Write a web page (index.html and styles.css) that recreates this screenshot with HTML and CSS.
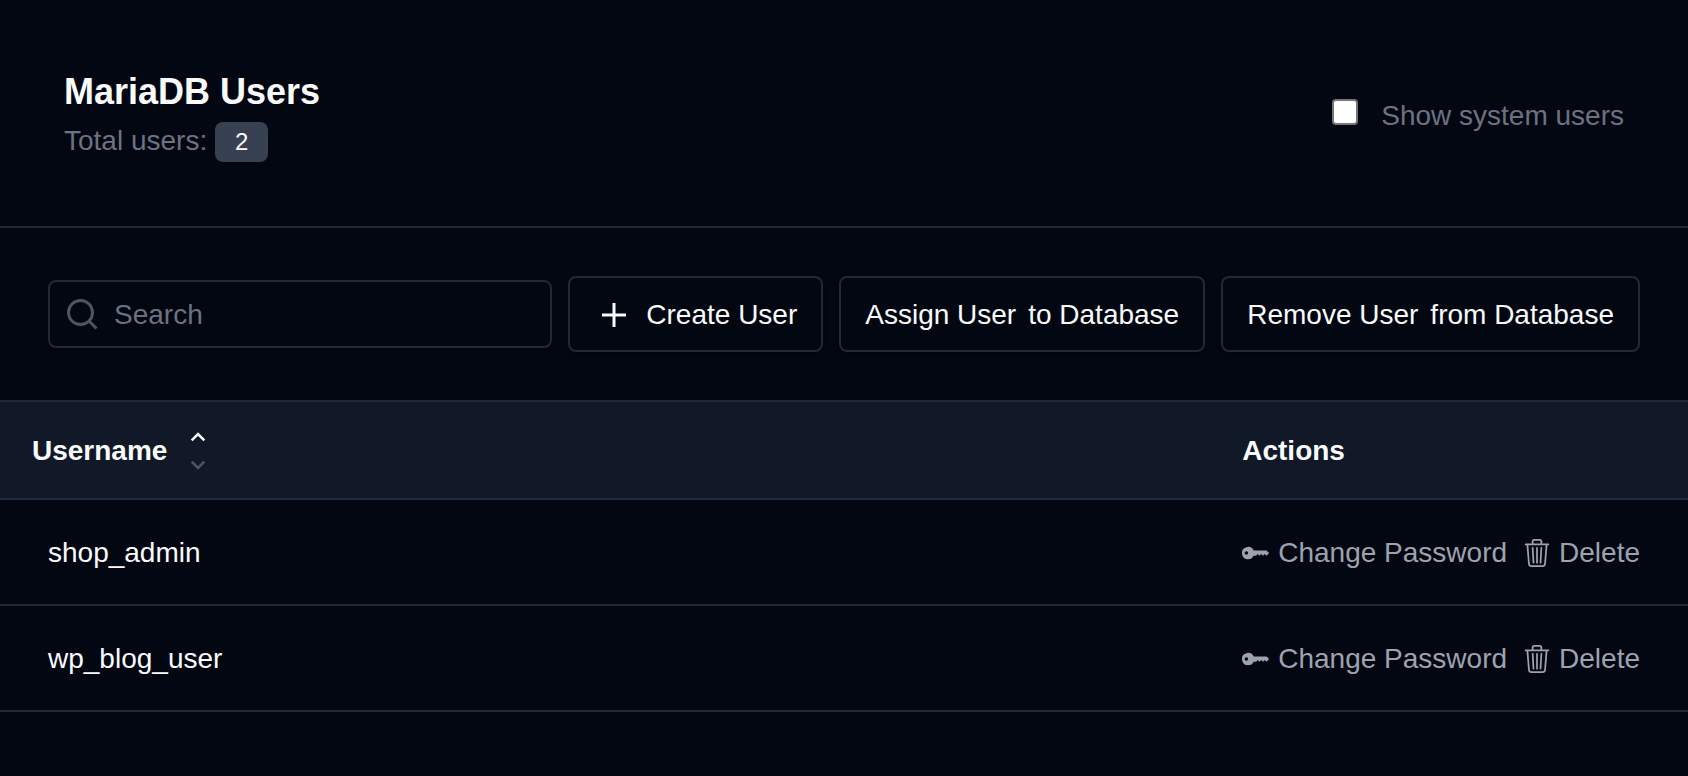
FILE: index.html
```html
<!DOCTYPE html>
<html lang="en">
<head>
    <meta charset="utf-8">
    <title>MariaDB Users</title>
    <link rel="stylesheet" href="styles.css">
</head>
<body>
    <svg class="sprite" aria-hidden="true">
        <symbol id="icon-key" viewBox="0 0 16 16">
            <path d="M3.5 11.5a3.5 3.5 0 1 1 3.163-5H14L15.5 8 14 9.5l-1-1-1 1-1-1-1 1-1-1-1 1H6.663a3.5 3.5 0 0 1-3.163 2zM2.5 9a1 1 0 1 0 0-2 1 1 0 0 0 0 2z"/>
        </symbol>
        <symbol id="icon-trash" viewBox="0 0 16 16">
            <path d="M6.5 1h3a.5.5 0 0 1 .5.5v1H6v-1a.5.5 0 0 1 .5-.5ZM11 2.5v-1A1.5 1.5 0 0 0 9.5 0h-3A1.5 1.5 0 0 0 5 1.5v1H1.5a.5.5 0 0 0 0 1h.538l.853 10.66A2 2 0 0 0 4.885 16h6.23a2 2 0 0 0 1.994-1.84l.853-10.66h.538a.5.5 0 0 0 0-1H11Zm1.958 1-.846 10.58a1 1 0 0 1-.997.92h-6.23a1 1 0 0 1-.997-.92L3.042 3.5h9.916Zm-7.487 1a.5.5 0 0 1 .528.47l.5 8.5a.5.5 0 0 1-.998.06L5 5.03a.5.5 0 0 1 .47-.53Zm5.058 0a.5.5 0 0 1 .47.53l-.5 8.5a.5.5 0 1 1-.998-.06l.5-8.5a.5.5 0 0 1 .528-.47ZM8 4.5a.5.5 0 0 1 .5.5v8.5a.5.5 0 0 1-1 0V5a.5.5 0 0 1 .5-.5Z"/>
        </symbol>
    </svg>

    <header class="page-header">
        <div>
            <h1 class="page-title">MariaDB Users</h1>
            <p class="total">Total users: <span class="badge">2</span></p>
        </div>
        <div class="system-toggle">
            <input type="checkbox" id="show-system">
            <label for="show-system">Show system users</label>
        </div>
    </header>

    <div class="toolbar">
        <div class="search">
            <svg class="search-icon" viewBox="0 0 32 32" aria-hidden="true">
                <circle cx="14.5" cy="14.5" r="12"/>
                <path d="M23 23l7.500 7.500"/>
            </svg>
            <input type="search" class="search-box" placeholder="Search" aria-label="Search">
        </div>
        <button type="button" class="btn">
            <svg class="plus-icon" viewBox="0 0 40 40" aria-hidden="true"><path d="M20 8v24M8 20h24"/></svg>
            Create User
        </button>
        <button type="button" class="btn"><span>Assign User</span><span>to Database</span></button>
        <button type="button" class="btn"><span>Remove User</span><span>from Database</span></button>
    </div>

    <table class="users">
        <thead>
            <tr>
                <th scope="col">
                    <button type="button" class="sort">
                        Username
                        <svg class="sort-icon" viewBox="0 0 18 40" aria-hidden="true">
                            <path d="M2.700 9.300l6.300-6.300 6.300 6.300"/>
                            <path class="sort-off" d="M2.700 30.700l6.300 6.300 6.300-6.300"/>
                        </svg>
                    </button>
                </th>
                <th scope="col" class="actions-col">Actions</th>
            </tr>
        </thead>
        <tbody>
            <tr>
                <td>shop_admin</td>
                <td class="actions-col">
                    <div class="actions">
                        <a href="#" class="action"><svg class="icon"><use href="#icon-key"/></svg>Change Password</a>
                        <a href="#" class="action"><svg class="icon"><use href="#icon-trash"/></svg>Delete</a>
                    </div>
                </td>
            </tr>
            <tr>
                <td>wp_blog_user</td>
                <td class="actions-col">
                    <div class="actions">
                        <a href="#" class="action"><svg class="icon"><use href="#icon-key"/></svg>Change Password</a>
                        <a href="#" class="action"><svg class="icon"><use href="#icon-trash"/></svg>Delete</a>
                    </div>
                </td>
            </tr>
        </tbody>
    </table>
</body>
</html>
```
FILE: styles.css
```css
* {
    box-sizing: border-box;
}
body {
    margin: 0;
    font-family: "Liberation Sans", Arial, sans-serif;
    font-size: 28px;
    line-height: 41px;
    background: #030712;
    color: #f9fafb;
}
button,
input {
    font: inherit;
    color: inherit;
}
.sprite {
    display: none;
}
.page-header {
    display: flex;
    align-items: center;
    justify-content: space-between;
    padding: 64px;
    border-bottom: 2px solid #1f2937;
}
.page-title {
    margin: 0;
    font-size: 36px;
    line-height: 56px;
}
.total {
    margin: 0;
    line-height: 42px;
    color: #6b7280;
}
.badge {
    display: inline-block;
    padding: 0 20px;
    border-radius: 8px;
    background: #374151;
    color: #f9fafb;
    font-size: 24px;
    line-height: 40px;
}
.system-toggle {
    display: flex;
    align-items: baseline;
    gap: 23px;
    padding-top: 4px;
    color: #6b7280;
}
.system-toggle input {
    width: 26px;
    height: 26px;
    margin: 0;
    border: 2px solid #767676;
    border-radius: 4px;
    background: #fff;
    appearance: none;
}
.system-toggle input:checked {
    background: #3b82f6;
}
.toolbar {
    display: flex;
    align-items: center;
    gap: 16px;
    padding: 48px;
}
.search {
    position: relative;
    flex: 1;
}
.search-icon {
    position: absolute;
    top: 18px;
    left: 18px;
    width: 32px;
    height: 32px;
    fill: none;
    stroke: #4b5563;
    stroke-width: 3;
}
.search-box {
    display: block;
    width: 100%;
    height: 68px;
    padding: 1px 16px 0 64px;
    border: 2px solid #1f2937;
    border-radius: 8px;
    background: transparent;
    box-shadow: 0 2px 4px rgba(0, 0, 0, 0.3);
    appearance: none;
}
.search-box::placeholder {
    color: #6b7280;
}
.btn {
    display: flex;
    align-items: center;
    gap: 12px;
    padding: 16px 24px 15px;
    border: 2px solid #1f2937;
    border-radius: 8px;
    background: transparent;
    box-shadow: 0 2px 4px rgba(0, 0, 0, 0.3);
    white-space: nowrap;
    cursor: pointer;
}
.btn:hover {
    background: #111827;
}
.plus-icon {
    width: 40px;
    height: 40px;
    fill: none;
    stroke: currentColor;
    stroke-width: 3;
}
.users {
    width: 100%;
    border-collapse: separate;
    border-spacing: 0;
}
.users th {
    padding: 28px 32px 27px;
    border-top: 2px solid #1f2937;
    border-bottom: 2px solid #1f2937;
    background: #111827;
    text-align: left;
}
.users td {
    padding: 32px 48px 31px;
    border-bottom: 2px solid #1f2937;
}
.users .actions-col {
    width: 1%;
    padding-left: 0;
    padding-right: 48px;
    white-space: nowrap;
}
.sort {
    display: flex;
    align-items: center;
    gap: 22px;
    padding: 0;
    border: 0;
    background: none;
    font-weight: bold;
    cursor: pointer;
}
.sort-icon {
    width: 18px;
    height: 40px;
    fill: none;
    stroke: currentColor;
    stroke-width: 2.5;
}
.sort-off {
    stroke: #4b5563;
}
.actions {
    display: flex;
    gap: 16px;
}
.action {
    display: flex;
    align-items: center;
    gap: 8px;
    color: #9ca3af;
    text-decoration: none;
}
.action:hover {
    color: #f9fafb;
}
.icon {
    width: 28px;
    height: 28px;
    fill: currentColor;
}
```
